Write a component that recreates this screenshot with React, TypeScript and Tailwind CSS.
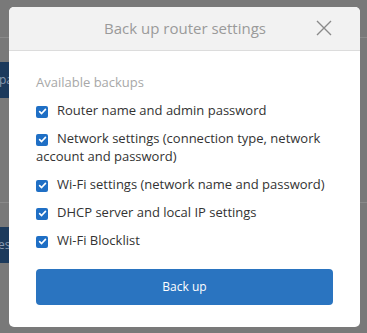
import React from 'react';

const items = [
	'Router name and admin password',
	'Network settings (connection type, network account and password)',
	'Wi-Fi settings (network name and password)',
	'DHCP server and local IP settings',
	'Wi-Fi Blocklist',
];

const Check = () => (
	<span className="inline-flex items-center justify-center w-[12px] h-[12px] rounded-[2px] bg-[#1f6fc5] align-[-1px] mr-[9px]">
		<svg width="9" height="9" viewBox="0 0 10 10" fill="none">
			<path d="M1.8 5.2 L4 7.3 L8.3 2.6" stroke="white" strokeWidth="1.8" strokeLinecap="round" strokeLinejoin="round" />
		</svg>
	</span>
);

export default function App() {
	return (
		<div className="relative w-[367px] h-[333px] overflow-hidden bg-[#797979] font-['Open_Sans',sans-serif]">
			{/* page behind the overlay */}
			<div className="flex flex-col">
				<div className="h-[38px] border-b border-[#8a8a8a]" />
				<div className="mt-[24px] h-[36px] w-[40px] bg-[#1c3a5c] text-[#8a9ab0] text-[12px] leading-[36px] overflow-hidden whitespace-nowrap">
					<span className="-ml-[1px]">pa</span>
				</div>
				<div className="mt-[104px] border-b border-[#8a8a8a]" />
				<div className="mt-[24px] h-[36px] w-[40px] bg-[#1c3a5c] text-[#8a9ab0] text-[12px] leading-[36px] overflow-hidden whitespace-nowrap">
					<span className="-ml-[2px]">es</span>
				</div>
			</div>

			{/* dialog */}
			<div className="absolute left-[9px] top-[7px] w-[351px] h-[320px] bg-white rounded-[5px] overflow-hidden flex flex-col">
				<div className="h-[44px] bg-[#f2f2f2] border-b border-[#dcdcdc] flex items-center justify-center relative">
					<span className="text-[15px] text-[#9a9a9a] ml-[1px]">Back up router settings</span>
					<svg className="absolute right-[28px] top-[13px]" width="16" height="16" viewBox="0 0 16 16">
						<path d="M1 1 L15 15 M15 1 L1 15" stroke="#8a8a8a" strokeWidth="1.4" />
					</svg>
				</div>
				<div className="px-[27px] pt-[22px]">
					<div className="text-[13px] text-[#a8a8a8] leading-[18px]">Available backups</div>
					<div className="mt-[10px] flex flex-col gap-[10px]">
						{items.map((t) => (
							<div key={t} className="text-[13px] leading-[18px] text-[#333]">
								<Check />
								{t}
							</div>
						))}
					</div>
					<button className="mt-[20px] w-full h-[36px] rounded-[4px] bg-[#2a74c0] text-white text-[12px]">
						Back up
					</button>
				</div>
			</div>
		</div>
	);
}
